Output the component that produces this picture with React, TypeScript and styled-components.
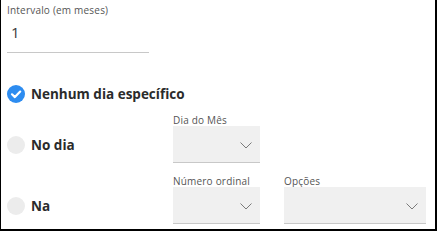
import React from 'react';
import styled, { createGlobalStyle } from 'styled-components';

const GlobalStyle = createGlobalStyle`
    html, body {
        margin: 0;
        padding: 0;
        background: #fff;
    }
    body {
        font-family: 'Open Sans', 'Liberation Sans', sans-serif;
    }
    * {
        box-sizing: border-box;
    }
`;

const Panel = styled.div`
    width: 437px;
    height: 231px;
    border-left: 1px solid #000;
    border-right: 2px solid #000;
    border-bottom: 2px solid #000;
    padding: 4px 0 0 6px;
    display: flex;
    flex-direction: column;
`;

const FieldLabel = styled.div`
    font-size: 10px;
    line-height: 12px;
    letter-spacing: 0.2px;
    color: #555;
    white-space: nowrap;
`;

const IntervalInput = styled.div`
    width: 142px;
    height: 37px;
    border-bottom: 1px solid #c8c8c8;
    padding: 6px 0 0 4px;
    font-size: 15px;
    line-height: 20px;
    color: #3a3a3a;
`;

const OptionRow = styled.div<{ $gap: number }>`
    display: flex;
    align-items: flex-end;
    gap: 24px;
    margin-top: ${p => p.$gap}px;
`;

const RadioLabel = styled.div`
    width: 142px;
    height: 36px;
    display: flex;
    align-items: center;
    gap: 6px;
    font-size: 13.5px;
    font-weight: 700;
    color: #2b2b2b;
    white-space: nowrap;
`;

const Circle = styled.span<{ $checked?: boolean }>`
    width: 18px;
    height: 18px;
    border-radius: 50%;
    flex: none;
    display: flex;
    align-items: center;
    justify-content: center;
    background: ${p => (p.$checked ? '#2d8cf0' : '#ececec')};
`;

const Field = styled.div`
    display: flex;
    flex-direction: column;
`;

const SelectBox = styled.div<{ $width: number }>`
    width: ${p => p.$width}px;
    height: 37px;
    background: #f0f0f0;
    border-bottom: 1px solid #c8c8c8;
    display: flex;
    align-items: center;
    justify-content: flex-end;
    padding: 2px 8px 0 0;
`;

const Chevron = () => (
    <svg width="12" height="7" viewBox="0 0 12 7">
        <polyline points="0.5,0.5 6,6 11.5,0.5" fill="none" stroke="#7a7a7a" strokeWidth="1" />
    </svg>
);

const Radio = ({ checked, label }: { checked?: boolean; label: string }) => (
    <RadioLabel>
        <Circle $checked={checked}>
            {checked && (
                <svg width="18" height="18" viewBox="0 0 18 18">
                    <polyline points="5,9.3 7.9,12.1 13.2,6.6" fill="none" stroke="#fff" strokeWidth="2.2" strokeLinecap="round" strokeLinejoin="round" />
                </svg>
            )}
        </Circle>
        {label}
    </RadioLabel>
);

const Select = ({ label, width }: { label: string; width: number }) => (
    <Field>
        <FieldLabel>{label}</FieldLabel>
        <SelectBox $width={width}>
            <Chevron />
        </SelectBox>
    </Field>
);

export default function App() {
    return (
        <>
            <GlobalStyle />
            <Panel>
                <FieldLabel>Intervalo (em meses)</FieldLabel>
                <IntervalInput>1</IntervalInput>

                <OptionRow $gap={23}>
                    <Radio checked label="Nenhum dia específico" />
                </OptionRow>

                <OptionRow $gap={2}>
                    <Radio label="No dia" />
                    <Select label="Dia do Mês" width={87} />
                </OptionRow>

                <OptionRow $gap={12}>
                    <Radio label="Na" />
                    <Select label="Número ordinal" width={87} />
                    <Select label="Opções" width={142} />
                </OptionRow>
            </Panel>
        </>
    );
}
